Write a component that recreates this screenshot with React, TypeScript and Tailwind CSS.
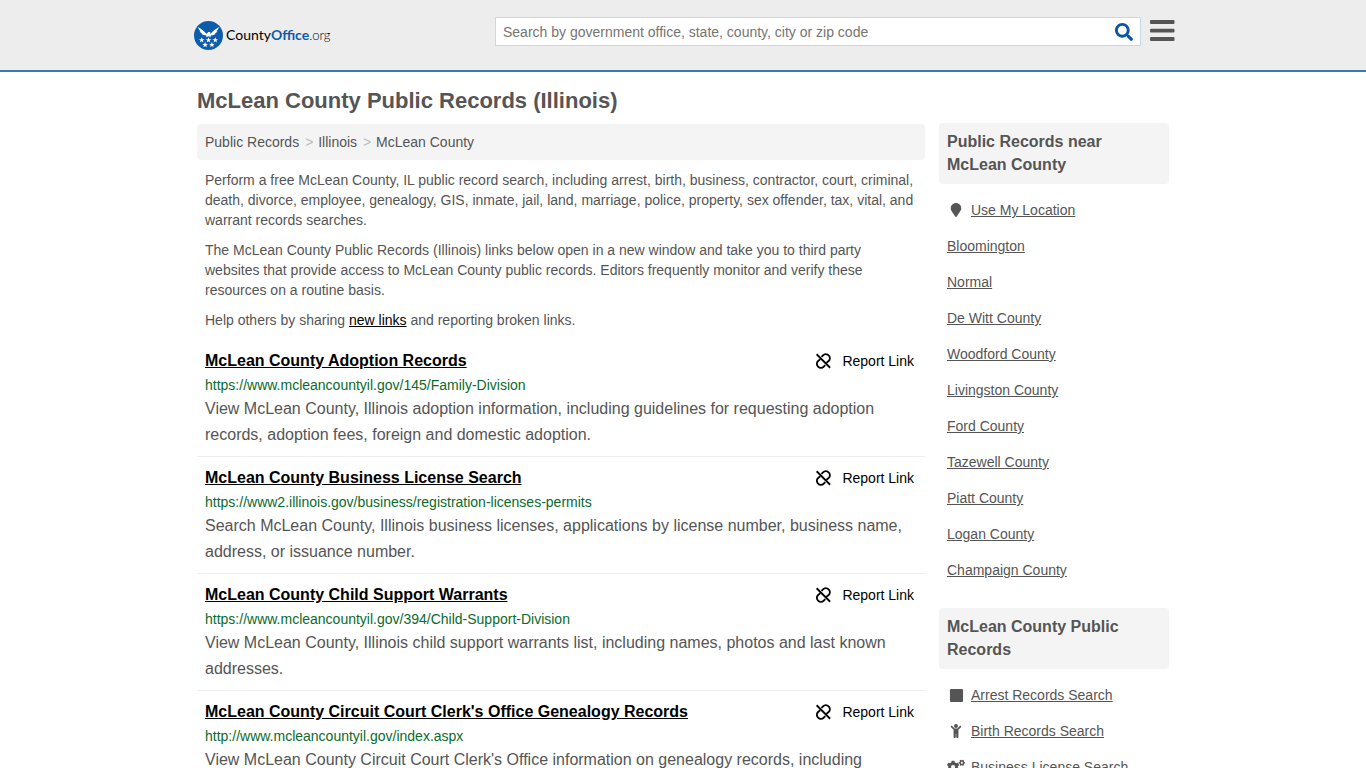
import React from 'react';
import { FaChild, FaCogs, FaMapMarker, FaSearch, FaSquare } from 'react-icons/fa';

interface RecordLink {
  title: string;
  url: string;
  description: string;
}

const records: RecordLink[] = [
  {
    title: 'McLean County Adoption Records',
    url: 'https://www.mcleancountyil.gov/145/Family-Division',
    description:
      'View McLean County, Illinois adoption information, including guidelines for requesting adoption records, adoption fees, foreign and domestic adoption.',
  },
  {
    title: 'McLean County Business License Search',
    url: 'https://www2.illinois.gov/business/registration-licenses-permits',
    description:
      'Search McLean County, Illinois business licenses, applications by license number, business name, address, or issuance number.',
  },
  {
    title: 'McLean County Child Support Warrants',
    url: 'https://www.mcleancountyil.gov/394/Child-Support-Division',
    description:
      'View McLean County, Illinois child support warrants list, including names, photos and last known addresses.',
  },
  {
    title: "McLean County Circuit Court Clerk's Office Genealogy Records",
    url: 'http://www.mcleancountyil.gov/index.aspx',
    description: "View McLean County Circuit Court Clerk's Office information on genealogy records, including",
  },
];

const nearby = [
  'Bloomington',
  'Normal',
  'De Witt County',
  'Woodford County',
  'Livingston County',
  'Ford County',
  'Tazewell County',
  'Piatt County',
  'Logan County',
  'Champaign County',
];

const searches = [
  { label: 'Arrest Records Search', icon: <FaSquare className="size-[15px]" /> },
  { label: 'Birth Records Search', icon: <FaChild className="size-3.5" /> },
  { label: 'Business License Search', icon: <FaCogs className="size-[18px]" /> },
];

const star = 'M0-2.9.8-.9 2.9-.9 1.2.5 1.8 2.5 0 1.2-1.8 2.5-1.2.5-2.9-.9-.8-.9Z';

const Logo: React.FC = () => (
  <a href="#" className="-ml-[3px] flex items-center gap-[3px] whitespace-nowrap font-['Lato',sans-serif] text-sm text-black">
    <svg viewBox="0 0 30 30" className="size-[29px] shrink-0" aria-hidden="true">
      <circle cx="15" cy="15" r="15" fill="#0d5cab" />
      {/* eagle */}
      <path
        d="M4.2 6.300c3.200 1.900 6 4 8.600 6.900l1-.4c.2-1.200 1.300-1.700 2.300-1.400l1.200.9-.8.3.7.6c2.400-2.900 5.500-5 8.600-6.900-.6 2.200-1.400 3.400-2.600 4.500l.9-.1c-.8 1.400-1.700 2.100-2.700 2.500l.6.1c-1.100 1.400-2.200 1.700-3.700 1.400l-1.600.7 1.300 1.600-3-1.300-3 1.300 1.300-1.600-1.600-.7c-1.500.3-2.600 0-3.700-1.400l.6-.1c-1-.4-1.900-1.100-2.700-2.500l.9.1c-1.200-1.100-2-2.300-2.600-4.500Z"
        fill="#fff"
      />
      <g fill="#fff">
        <path d={star} transform="translate(8 19.700)" />
        <path d={star} transform="translate(15 19.700)" />
        <path d={star} transform="translate(22 19.700)" />
        <path d={star} transform="translate(11.500 24.700)" />
        <path d={star} transform="translate(18.500 24.700)" />
      </g>
    </svg>
    <span>
      County<b className="text-[#0d5cab]">Office</b>
      <span className="text-[13px] font-light">.org</span>
    </span>
  </a>
);

const UnlinkIcon: React.FC = () => (
  <svg viewBox="0 0 24 24" className="size-[18px]" fill="none" stroke="currentColor" strokeWidth="2.4" aria-hidden="true">
    <path d="M3.500 3l18 18" />
    <path d="M10 6.500l2-2a5 5 0 0 1 7.500 0a5 5 0 0 1 0 7.500l-3 2.500" />
    <path d="M15 17.500l-2 2a5 5 0 0 1-7.500 0a5 5 0 0 1 0-7.500l3-2.500" />
  </svg>
);

const Header: React.FC = () => (
  <header className="border-b-2 border-[#337ab7] bg-[#ededed]">
    <div className="mx-auto flex h-[70px] max-w-[972px] items-center">
      <div className="w-[298px] shrink-0">
        <Logo />
      </div>
      <form
        className="mb-2 flex h-[29px] flex-1 items-center border border-[#c3d9ec] bg-white pt-0.5"
        onSubmit={e => e.preventDefault()}
      >
        <input
          type="text"
          aria-label="Search"
          placeholder="Search by government office, state, county, city or zip code"
          className="min-w-0 flex-1 px-[7px] text-sm outline-none placeholder:text-[#757575]"
        />
        <button type="submit" aria-label="Submit search" className="mr-[7px] text-[#0b55a5]">
          <FaSearch className="size-[18px]" />
        </button>
      </form>
      <button type="button" aria-label="Menu" className="mb-2 ml-2 mr-[-6px] text-[#555]">
        <svg viewBox="0 0 26 22" className="h-[22px] w-[26px]" fill="currentColor">
          <rect x="1" y="0" width="24.500" height="4" rx="1" />
          <rect x="1" y="8.700" width="24.500" height="3.800" rx="1" />
          <rect x="1" y="17" width="24.500" height="4" rx="1" />
        </svg>
      </button>
    </div>
  </header>
);

const RecordItem: React.FC<{ record: RecordLink }> = ({ record }) => (
  <li className="border-b border-[#eee] p-2">
    <div className="flex h-[26px] items-center justify-between pr-[3px]">
      <a href="#" className="text-base font-bold text-black underline">
        {record.title}
      </a>
      <a href="#" className="flex items-center gap-2.5 text-sm text-black">
        <UnlinkIcon />
        Report Link
      </a>
    </div>
    <p className="text-sm leading-[22px] text-[#0a6b2d]">{record.url}</p>
    <p className="text-base leading-[26px]">{record.description}</p>
  </li>
);

const SideHeading: React.FC<{ children: React.ReactNode }> = ({ children }) => (
  <h2 className="rounded bg-[#f4f4f4] px-2 pt-[7px] pb-2 text-base leading-[23px] font-bold">{children}</h2>
);

const SideLink: React.FC<{ label: string; icon?: React.ReactNode }> = ({ label, icon }) => (
  <li className="flex h-9 items-center gap-1.5">
    {icon && <span className="flex w-[18px] justify-center">{icon}</span>}
    <a href="#" className="underline">
      {label}
    </a>
  </li>
);

const App: React.FC = () => {
  return (
    <div className="bg-white font-['Liberation_Sans',Arial,sans-serif] text-sm text-[#555]">
      <Header />
      <div className="mx-auto max-w-[972px]">
        <h1 className="pt-3.5 text-[22px] leading-[30px] font-bold">McLean County Public Records (Illinois)</h1>
        <div className="flex items-start gap-3.5 pt-[7px]">
          <main className="mt-px min-w-0 flex-1">
            <nav aria-label="Breadcrumb" className="flex h-9 items-center gap-1.5 rounded bg-[#f4f4f4] px-2">
              <a href="#">Public Records</a>
              <span className="w-[7px] text-[#bbb]">&gt;</span>
              <a href="#">Illinois</a>
              <span className="w-[7px] text-[#bbb]">&gt;</span>
              <a href="#">McLean County</a>
            </nav>
            <div className="flex flex-col gap-2.5 px-2 py-2.5">
              <p>
                Perform a free McLean County, IL public record search, including arrest, birth, business, contractor, court, criminal,
                death, divorce, employee, genealogy, GIS, inmate, jail, land, marriage, police, property, sex offender, tax, vital, and
                warrant records searches.
              </p>
              <p>
                The McLean County Public Records (Illinois) links below open in a new window and take you to third party websites that
                provide access to McLean County public records. Editors frequently monitor and verify these resources on a routine
                basis.
              </p>
              <p>
                Help others by sharing{' '}
                <a href="#" className="text-black underline">
                  new links
                </a>{' '}
                and reporting broken links.
              </p>
            </div>
            <ul>
              {records.map(record => (
                <RecordItem key={record.title} record={record} />
              ))}
            </ul>
          </main>

          <aside className="w-[230px] shrink-0">
            <SideHeading>Public Records near McLean County</SideHeading>
            <ul className="px-2 pt-2 pb-5">
              <SideLink label="Use My Location" icon={<FaMapMarker className="size-3.5" />} />
              {nearby.map(place => (
                <SideLink key={place} label={place} />
              ))}
            </ul>
            <SideHeading>McLean County Public Records</SideHeading>
            <ul className="px-2 pt-2">
              {searches.map(item => (
                <SideLink key={item.label} label={item.label} icon={item.icon} />
              ))}
            </ul>
          </aside>
        </div>
      </div>
    </div>
  );
};

export default App;
